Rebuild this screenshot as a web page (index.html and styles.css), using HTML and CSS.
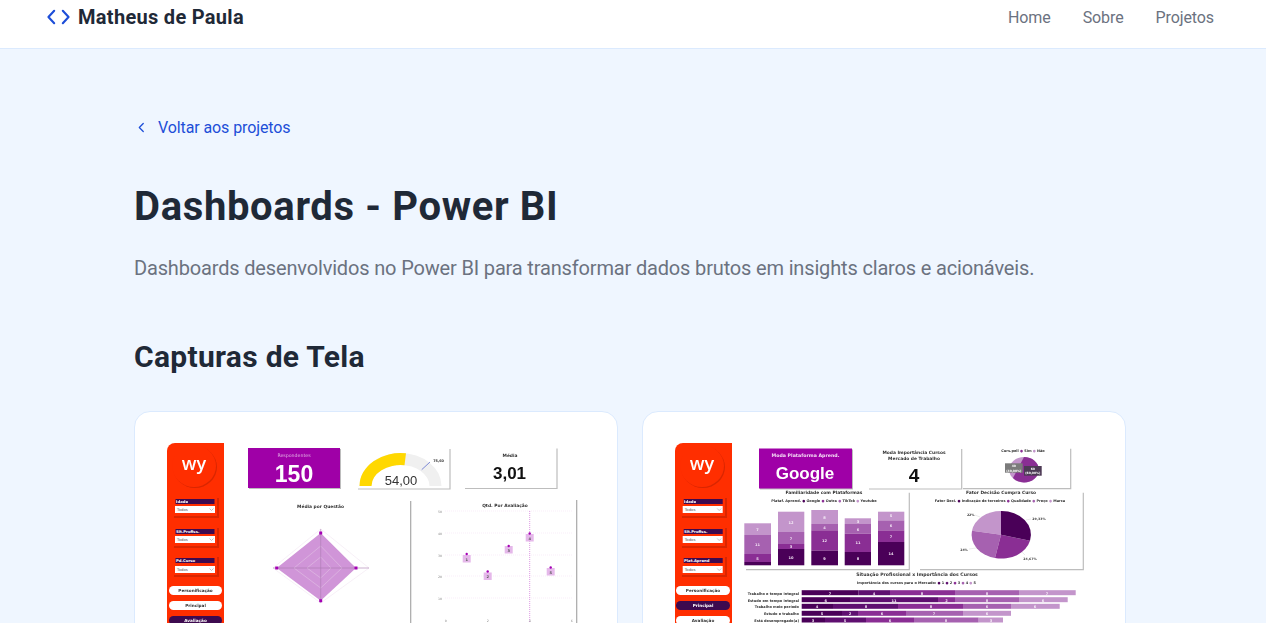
FILE: index.html
```html
<!DOCTYPE html>
<html lang="pt-BR">
<head>
  <meta charset="UTF-8" />
  <meta name="viewport" content="width=device-width, initial-scale=1.0" />
  <title>Dashboards - Power BI</title>
  <link rel="stylesheet" href="styles.css">
</head>
<body>
  <header class="topbar">
    <a href="#" class="brand">
      <svg class="brand-icon" viewBox="0 0 24 16" fill="none" stroke="currentColor" stroke-width="2.2" stroke-linecap="round" stroke-linejoin="round">
        <path d="M7.5 1.5 1.5 8l6 6.5" />
        <path d="M16.5 1.5 22.5 8l-6 6.5" />
      </svg>
      Matheus de Paula
    </a>
    <nav class="nav">
      <a href="#">Home</a>
      <a href="#">Sobre</a>
      <a href="#">Projetos</a>
    </nav>
  </header>

  <main class="content">
    <a href="#" class="back">
      <svg class="back-icon" viewBox="0 0 8 12" fill="none" stroke="currentColor" stroke-width="1.5" stroke-linecap="round" stroke-linejoin="round">
        <path d="M6 1.5 1.5 6 6 10.5" />
      </svg>
      Voltar aos projetos
    </a>
    <h1>Dashboards - Power BI</h1>
    <p class="lead">Dashboards desenvolvidos no Power BI para transformar dados brutos em insights claros e acionáveis.</p>
    <h2>Capturas de Tela</h2>

    <div class="shots">
      <!-- painel 1: avaliação -->
      <div class="shot-card">
        <svg class="shot" viewBox="167 444 418 240">
          <defs>
            <g id="pick">
              <rect class="white" x="0" y="0" width="40" height="7" />
              <text class="t-todos" x="2" y="5">Todos</text>
              <path class="pick-arrow" d="M34.500 2.500l2 2 2-2" />
            </g>
          </defs>
          <path class="red" d="M167 452a8 8 0 0 1 8-8h49v240h-57z" />
          <ellipse class="red-dark" cx="195" cy="468" rx="22" ry="21" />
          <ellipse class="red" cx="194" cy="467" rx="22" ry="21" />
          <text class="t-logo" x="194" y="471">wy</text>

          <rect class="red-dark" x="174" y="499" width="45" height="20" />
          <rect class="red" x="172" y="497" width="45" height="20" />
          <rect class="label-bar" x="175.500" y="500" width="39" height="5" />
          <text class="t-label" x="176" y="504.200">Idade</text>
          <use href="#pick" x="175" y="507" />

          <rect class="red-dark" x="174" y="529" width="45" height="20" />
          <rect class="red" x="172" y="527" width="45" height="20" />
          <rect class="label-bar" x="175.500" y="530" width="39" height="5" />
          <text class="t-label" x="176" y="534.200">Sit.Profiss.</text>
          <use href="#pick" x="175" y="537" />

          <rect class="red-dark" x="174" y="558" width="45" height="20" />
          <rect class="red" x="172" y="556" width="45" height="20" />
          <rect class="label-bar" x="175.500" y="559" width="39" height="5" />
          <text class="t-label" x="176" y="563.200">Pd.Curso</text>
          <use href="#pick" x="175" y="567" />

          <rect class="white" x="169" y="587" width="53" height="9" rx="4.500" />
          <text class="t-pill" x="195.500" y="593.200">Personificação</text>
          <rect class="white" x="169" y="602" width="53" height="9" rx="4.500" />
          <text class="t-pill" x="195.500" y="608.200">Principal</text>
          <rect class="label-bar" x="169" y="617" width="53" height="9" rx="4.500" />
          <text class="t-pill t-pill-on" x="195.500" y="623">Avaliação</text>

          <rect class="kpi-shadow" x="249" y="450" width="92" height="40" />
          <rect class="purple" x="248" y="449" width="92" height="40" />
          <text class="t-kpi-small" x="294" y="458">Respondentes</text>
          <text class="t-kpi-big" x="294" y="483">150</text>

          <path class="gauge-back" d="M359.500 487a41 33 0 0 1 82 0h-12a29 21 0 0 0-58 0z" />
          <path class="gauge-fill" d="M359.500 487a41 33 0 0 1 46.500-32.700l-1.500 12a29 21 0 0 0-33 20.700z" />
          <path class="gauge-target" d="M421.700 470.700 430 463" />
          <text class="t-bold" x="438.500" y="463">75,60</text>
          <text class="t-gauge" x="401" y="486">54,00</text>
          <path class="frame" d="M358 490h92v-40" />

          <path class="frame" d="M465 489.500h92v-40" />
          <text class="t-title" x="510" y="457.500">Média</text>
          <text class="t-value" x="509.500" y="480">3,01</text>

          <text class="t-title" x="320.500" y="509">Média por Questão</text>
          <path class="radar-web" d="M320.700 530 369 569 320.700 604 273 569z" />
          <path class="radar-fill" d="M320.700 534 356 569 320.700 601.700 276.700 569z" />
          <path class="radar-web" d="M320.700 547 342 569 320.700 589 294 569zM320.700 558 331 569 320.700 579 307 569z" />
          <path class="radar-axis" d="M273 569h96M320.700 530v74" />
          <rect class="magenta" x="319.200" y="532.500" width="3" height="3" />
          <rect class="magenta" x="354.500" y="567.500" width="3" height="3" />
          <rect class="magenta" x="319.200" y="600.200" width="3" height="3" />
          <rect class="magenta" x="275.200" y="567.500" width="3" height="3" />

          <path class="frame frame-dark" d="M410.700 502v182M576.700 501v183" />
          <text class="t-title" x="505" y="508">Qtd. Por Avaliação</text>
          <path class="grid-line" d="M445 512h127M445 534h127M445 556h127M445 577h127M445 599h127" />
          <path class="mark-line" d="M529.700 512v112" />
          <text class="t-axis" x="440" y="513.500">50</text>
          <text class="t-axis" x="440" y="535.500">40</text>
          <text class="t-axis" x="440" y="557.500">30</text>
          <text class="t-axis" x="440" y="578.500">20</text>
          <text class="t-axis" x="440" y="600.500">10</text>
          <text class="t-axis" x="445.700" y="622.500">0</text>
          <text class="t-axis" x="487.700" y="622.500">2</text>
          <text class="t-axis" x="529.700" y="622.500">4</text>
          <text class="t-axis" x="571.700" y="622.500">6</text>
          <g>
            <rect class="dot-box" x="462.700" y="556" width="8" height="7.500" />
            <circle class="magenta" cx="466.700" cy="555" r="1.200" />
            <text class="t-dot" x="466.700" y="561.500">1</text>
            <rect class="dot-box" x="483.700" y="573.500" width="8" height="7.500" />
            <circle class="magenta" cx="487.700" cy="572.500" r="1.200" />
            <text class="t-dot" x="487.700" y="579">2</text>
            <rect class="dot-box" x="504.700" y="547" width="8" height="7.500" />
            <circle class="magenta" cx="508.700" cy="547" r="1.200" />
            <text class="t-dot" x="508.700" y="552.500">3</text>
            <rect class="dot-box" x="525.700" y="535" width="8" height="7.500" />
            <circle class="magenta" cx="529.700" cy="534.500" r="1.200" />
            <text class="t-dot" x="529.700" y="540.500">4</text>
            <rect class="dot-box" x="546.700" y="569" width="8" height="7.500" />
            <circle class="magenta" cx="550.700" cy="568.500" r="1.200" />
            <text class="t-dot" x="550.700" y="574.500">5</text>
          </g>
        </svg>
      </div>

      <!-- painel 2: plataformas -->
      <div class="shot-card">
        <svg class="shot" viewBox="675 444 418 240">
          <path class="red" d="M675 452a8 8 0 0 1 8-8h49v240h-57z" />
          <ellipse class="red-dark" cx="703" cy="468" rx="22" ry="21" />
          <ellipse class="red" cx="702" cy="467" rx="22" ry="21" />
          <text class="t-logo" x="702" y="471">wy</text>

          <rect class="red-dark" x="682" y="499" width="45" height="20" />
          <rect class="red" x="680" y="497" width="45" height="20" />
          <rect class="label-bar" x="683.700" y="500" width="39" height="5" />
          <text class="t-label" x="684" y="504.200">Idade</text>
          <use href="#pick" x="682.700" y="507" />

          <rect class="red-dark" x="682" y="529" width="45" height="20" />
          <rect class="red" x="680" y="527" width="45" height="20" />
          <rect class="label-bar" x="683.700" y="530" width="39" height="5" />
          <text class="t-label" x="684" y="534.200">Sit.Profiss.</text>
          <use href="#pick" x="682.700" y="537" />

          <rect class="red-dark" x="682" y="558" width="45" height="20" />
          <rect class="red" x="680" y="556" width="45" height="20" />
          <rect class="label-bar" x="683.700" y="559" width="39" height="5" />
          <text class="t-label" x="684" y="563.200">Plat.Aprend</text>
          <use href="#pick" x="682.700" y="567" />

          <rect class="white" x="676" y="587" width="54" height="9" rx="4.500" />
          <text class="t-pill" x="703" y="593.200">Personificação</text>
          <rect class="label-bar" x="676" y="602" width="54" height="9" rx="4.500" />
          <text class="t-pill t-pill-on" x="703" y="608.200">Principal</text>
          <rect class="white" x="676" y="617" width="54" height="9" rx="4.500" />
          <text class="t-pill" x="703" y="623">Avaliação</text>

          <rect class="kpi-shadow" x="760" y="450.500" width="93" height="40" />
          <rect class="purple" x="759" y="449.500" width="93" height="40" />
          <text class="t-kpi-small t-kpi-strong" x="805.500" y="458">Moda Plataforma Aprend.</text>
          <text class="t-kpi-word" x="805" y="480">Google</text>

          <path class="frame" d="M869 490h92.700v-40" />
          <text class="t-title" x="914" y="454.500">Moda Importância Cursos</text>
          <text class="t-title" x="914" y="460.500">Mercado de Trabalho</text>
          <text class="t-value t-value-four" x="914" y="483">4</text>

          <path class="frame" d="M963 489.700h107.700v-40" />
          <text class="t-legend" x="1023" y="452.500">Curs.pell <tspan class="c3">●</tspan> Sim <tspan class="c5">●</tspan> Não</text>
          <ellipse class="s5" cx="1024" cy="470.700" rx="14.800" ry="12.700" />
          <path class="s3" d="M1024 458a14.800 12.700 0 0 1 0 25.400 14.800 12.700 0 0 1-11-4.400z" />
          <rect class="tag" x="1005" y="464.300" width="17.700" height="9.400" />
          <text class="t-tag" x="1013.800" y="468.200">40</text>
          <text class="t-tag" x="1013.800" y="472.500">(40,00%)</text>
          <rect class="tag tag-dark" x="1024" y="467" width="17.700" height="9.700" />
          <text class="t-tag" x="1032.800" y="471">60</text>
          <text class="t-tag" x="1032.800" y="475.300">(60,00%)</text>

          <text class="t-title" x="824" y="495">Familiaridade com Plataformas</text>
          <text class="t-legend" x="824" y="503">Plataf. Aprend. <tspan class="c1">●</tspan> Google <tspan class="c3">●</tspan> Outra <tspan class="c4">●</tspan> TikTok <tspan class="c5">●</tspan> Youtube</text>
          <path class="frame" d="M746 570.700h163.300v-77" />
          <g>
            <rect class="s5" x="744.300" y="524.300" width="26.700" height="11.700" />
            <rect class="s4" x="744.300" y="536" width="26.700" height="19" />
            <rect class="s3" x="744.300" y="555" width="26.700" height="8" />
            <rect class="s1" x="744.300" y="563" width="26.700" height="3.300" />
            <text class="t-seg t-seg-dark" x="757.600" y="531.500">7</text>
            <text class="t-seg" x="757.600" y="547">11</text>
            <text class="t-seg" x="757.600" y="560.500">5</text>

            <rect class="s5" x="778" y="512.700" width="26.300" height="20.300" />
            <rect class="s4" x="778" y="533" width="26.300" height="12" />
            <rect class="s3" x="778" y="545" width="26.300" height="5" />
            <rect class="s1" x="778" y="550" width="26.300" height="16.300" />
            <text class="t-seg t-seg-dark" x="791" y="524.500">12</text>
            <text class="t-seg" x="791" y="540.500">7</text>
            <text class="t-seg" x="791" y="549">3</text>
            <text class="t-seg" x="791" y="559.500">10</text>

            <rect class="s5" x="811.300" y="511" width="26.700" height="14" />
            <rect class="s4" x="811.300" y="525" width="26.700" height="6.300" />
            <rect class="s3" x="811.300" y="531.300" width="26.700" height="20.400" />
            <rect class="s1" x="811.300" y="551.700" width="26.700" height="14.600" />
            <text class="t-seg t-seg-dark" x="824.600" y="519.500">8</text>
            <text class="t-seg" x="824.600" y="529.500">4</text>
            <text class="t-seg" x="824.600" y="543">12</text>
            <text class="t-seg" x="824.600" y="560.500">9</text>

            <rect class="s5" x="844.700" y="519.300" width="26.300" height="5.700" />
            <rect class="s4" x="844.700" y="525" width="26.300" height="9.700" />
            <rect class="s3" x="844.700" y="534.700" width="26.300" height="18.300" />
            <rect class="s1" x="844.700" y="553" width="26.300" height="13.300" />
            <text class="t-seg t-seg-dark" x="858" y="523.500">3</text>
            <text class="t-seg" x="858" y="531.500">6</text>
            <text class="t-seg" x="858" y="545">11</text>
            <text class="t-seg" x="858" y="561">8</text>

            <rect class="s5" x="878" y="512.700" width="26.300" height="8.700" />
            <rect class="s4" x="878" y="521.400" width="26.300" height="10" />
            <rect class="s3" x="878" y="531.400" width="26.300" height="11.600" />
            <rect class="s1" x="878" y="543" width="26.300" height="23.300" />
            <text class="t-seg t-seg-dark" x="891" y="518">5</text>
            <text class="t-seg" x="891" y="527.500">6</text>
            <text class="t-seg" x="891" y="538.500">7</text>
            <text class="t-seg" x="891" y="556">14</text>
          </g>

          <text class="t-title" x="1001" y="495">Fator Decisão Compra Curso</text>
          <text class="t-legend" x="1000" y="503">Fator Deci. <tspan class="c1">●</tspan> Indicação de terceiros <tspan class="c3">●</tspan> Qualidade <tspan class="c4">●</tspan> Preço <tspan class="c5">●</tspan> Marca</text>
          <path class="frame" d="M920 570.700h163.300v-77" />
          <path class="s5" d="M1001 535.700V512a29.300 23.700 0 0 0-29 19.700z" />
          <path class="s4" d="M1001 535.700 972 531.700a29.300 23.700 0 0 0 23 27.300z" />
          <path class="s3" d="M1001 535.700 995 559a29.300 23.700 0 0 0 35-17.300z" />
          <path class="s1" d="M1001 535.700V512a29.300 23.700 0 0 1 29 29.700z" />
          <path class="pie-lead" d="M1026 521l5-1M1022 553l3 3M976 549l-7 1M980 518l-5-2" />
          <text class="t-pct" x="1039" y="521">29,33%</text>
          <text class="t-pct" x="1030" y="560.500">24,67%</text>
          <text class="t-pct" x="964" y="551.500">24%</text>
          <text class="t-pct" x="970.700" y="516.800">22%</text>

          <text class="t-title t-title-wide" x="917" y="577">Situação Profissional x Importância dos Cursos</text>
          <text class="t-legend" x="916.500" y="584.500">Importância dos cursos para o Mercado: <tspan class="c1">●</tspan> 1 <tspan class="c2">●</tspan> 2 <tspan class="c3">●</tspan> 3 <tspan class="c4">●</tspan> 4 <tspan class="c5">●</tspan> 5</text>

          <text class="t-row" x="799" y="595.500">Trabalho e tempo integral</text>
          <rect class="s1" x="801.700" y="591.200" width="56.600" height="5" />
          <rect class="s2" x="858.300" y="591.200" width="31.700" height="5" />
          <rect class="s3" x="890" y="591.200" width="65" height="5" />
          <rect class="s4" x="955" y="591.200" width="64" height="5" />
          <rect class="s5" x="1019" y="591.200" width="56.700" height="5" />
          <text class="t-seg" x="830" y="595.500">7</text>
          <text class="t-seg" x="874" y="595.500">4</text>
          <text class="t-seg" x="922" y="595.500">8</text>
          <text class="t-seg" x="987" y="595.500">8</text>
          <text class="t-seg t-seg-dark" x="1047" y="595.500">7</text>

          <text class="t-row" x="799" y="602.500">Estudo em tempo integral</text>
          <rect class="s1" x="801.700" y="598.200" width="48.300" height="5" />
          <rect class="s2" x="850" y="598.200" width="88" height="5" />
          <rect class="s3" x="938" y="598.200" width="17" height="5" />
          <rect class="s4" x="955" y="598.200" width="64" height="5" />
          <rect class="s5" x="1019" y="598.200" width="48.700" height="5" />
          <text class="t-seg" x="825.700" y="602.500">6</text>
          <text class="t-seg" x="894" y="602.500">11</text>
          <text class="t-seg" x="946.500" y="602.500">2</text>
          <text class="t-seg" x="987" y="602.500">8</text>
          <text class="t-seg t-seg-dark" x="1043" y="602.500">6</text>

          <text class="t-row" x="799" y="609">Trabalho meio período</text>
          <rect class="s1" x="801.700" y="604.800" width="31.300" height="5" />
          <rect class="s2" x="833" y="604.800" width="65" height="5" />
          <rect class="s3" x="898" y="604.800" width="65" height="5" />
          <rect class="s4" x="963" y="604.800" width="48" height="5" />
          <rect class="s5" x="1011" y="604.800" width="48.700" height="5" />
          <text class="t-seg" x="817" y="609">4</text>
          <text class="t-seg" x="866" y="609">8</text>
          <text class="t-seg" x="931" y="609">8</text>
          <text class="t-seg" x="987" y="609">6</text>
          <text class="t-seg t-seg-dark" x="1035" y="609">6</text>

          <text class="t-row" x="799" y="616">Estudo e trabalho</text>
          <rect class="s1" x="801.700" y="611.800" width="40.300" height="5" />
          <rect class="s2" x="842" y="611.800" width="16" height="5" />
          <rect class="s3" x="858" y="611.800" width="48" height="5" />
          <rect class="s4" x="906" y="611.800" width="57" height="5" />
          <rect class="s5" x="963" y="611.800" width="48" height="5" />
          <text class="t-seg" x="822" y="616">5</text>
          <text class="t-seg" x="850" y="616">2</text>
          <text class="t-seg" x="882" y="616">6</text>
          <text class="t-seg" x="934" y="616">7</text>
          <text class="t-seg t-seg-dark" x="987" y="616">6</text>

          <text class="t-row" x="799" y="622.700">Está desempregado(a)</text>
          <rect class="s1" x="801.700" y="618.500" width="23.300" height="5" />
          <rect class="s2" x="825" y="618.500" width="41" height="5" />
          <rect class="s3" x="866" y="618.500" width="48" height="5" />
          <rect class="s4" x="914" y="618.500" width="64.700" height="5" />
          <rect class="s5" x="978.700" y="618.500" width="24.300" height="5" />
          <text class="t-seg" x="813" y="622.700">3</text>
          <text class="t-seg" x="845" y="622.700">5</text>
          <text class="t-seg" x="890" y="622.700">6</text>
          <text class="t-seg" x="946" y="622.700">8</text>
          <text class="t-seg t-seg-dark" x="991" y="622.700">3</text>
        </svg>
      </div>
    </div>
  </main>
</body>
</html>
```

FILE: styles.css
```css
html, body {
  height: 100%;
  overflow: hidden;
}
body {
  margin: 0;
  background: #eff6ff;
  font-family: Roboto, "Noto Sans", sans-serif;
  color: #1f2937;
}
a {
  text-decoration: none;
}

.topbar {
  box-sizing: border-box;
  height: 49px;
  background: white;
  border-bottom: 1px solid #dbeafe;
  padding: 0 52px 14px 47px;
  display: flex;
  justify-content: space-between;
  align-items: center;
}
.brand {
  display: flex;
  align-items: center;
  gap: 8px;
  font-size: 20px;
  font-weight: 700;
  letter-spacing: 0.3px;
  color: #1f2937;
}
.brand-icon {
  width: 23px;
  height: 16px;
  color: #1d4ed8;
}
.nav {
  display: flex;
  gap: 32px;
  font-size: 16px;
  letter-spacing: -0.1px;
}
.nav a {
  color: #6b7280;
}

.content {
  width: 992px;
  margin-left: 134px;
  padding-top: 66px;
}
.back {
  display: flex;
  align-items: center;
  gap: 13px;
  height: 24px;
  padding-left: 4px;
  font-size: 16px;
  letter-spacing: -0.1px;
  color: #1d4ed8;
}
.back-icon {
  width: 7px;
  height: 11px;
}
h1 {
  margin: 44px 0 0;
  font-size: 40px;
  line-height: 48px;
  font-weight: 700;
  letter-spacing: 0.65px;
  color: #1f2937;
}
.lead {
  margin: 23px 0 0;
  font-size: 20px;
  line-height: 28px;
  letter-spacing: -0.16px;
  color: #6b7280;
}
h2 {
  margin: 57px 0 0;
  font-size: 30px;
  line-height: 36px;
  font-weight: 700;
  letter-spacing: 0.3px;
  color: #1f2937;
}

.shots {
  display: grid;
  grid-template-columns: 1fr 1fr;
  gap: 24px;
  margin-top: 36px;
}
.shot-card {
  background: white;
  border: 1px solid #dbeafe;
  border-radius: 16px;
  padding: 31px 32px;
}
.shot {
  display: block;
  width: 418px;
  height: 240px;
  filter: blur(0.4px);
  font-family: "DejaVu Sans", sans-serif;
}

/* cores dos paineis */
.red { fill: #ff2e00; }
.red-dark { fill: #d92600; }
.white { fill: white; }
.label-bar { fill: #3d0a4f; }
.purple { fill: #9f00a7; }
.magenta { fill: #a400b4; }
.kpi-shadow { fill: #bdbdbd; }
.s1 { fill: #4a0058; }
.s2 { fill: #5f0f70; }
.s3 { fill: #8a2e94; }
.s4 { fill: #a661b0; }
.s5 { fill: #c395cb; }
.c1 { fill: #4a0058; }
.c2 { fill: #5f0f70; }
.c3 { fill: #8a2e94; }
.c4 { fill: #a661b0; }
.c5 { fill: #c395cb; }
.gauge-back { fill: #f0f0f0; }
.gauge-fill { fill: #ffd800; }
.gauge-target { stroke: #4a5bc8; stroke-width: 0.7; fill: none; }
.frame { fill: none; stroke: #bdbdbd; stroke-width: 1.2; }
.frame-dark { stroke: #a8a8a8; }
.radar-fill { fill: #d095d8; }
.radar-web { fill: none; stroke: #ead9ec; stroke-width: 0.4; }
.radar-axis { fill: none; stroke: #a97ab0; stroke-width: 0.6; }
.grid-line { fill: none; stroke: #f3d8f3; stroke-width: 0.5; stroke-dasharray: 1 1; }
.mark-line { fill: none; stroke: #cf6cd6; stroke-width: 0.7; stroke-dasharray: 1 1; }
.dot-box { fill: #e5b8ea; }
.pick-arrow { fill: none; stroke: #888; stroke-width: 0.5; }
.tag { fill: #7b7b7b; }
.tag-dark { fill: #4d3a55; }
.pie-lead { fill: none; stroke: #ccc; stroke-width: 0.4; }

/* textos dos paineis */
.t-logo { fill: white; font-family: "Open Sans", sans-serif; font-size: 18px; font-weight: 600; text-anchor: middle; }
.t-label { fill: white; font-size: 3.800px; font-weight: 700; }
.t-todos { fill: #555; font-size: 3.800px; }
.t-pill { fill: #333; font-size: 4.200px; font-weight: 700; text-anchor: middle; }
.t-pill-on { fill: white; }
.t-kpi-small { fill: #e3b4e6; font-size: 4.700px; text-anchor: middle; }
.t-kpi-strong { fill: #f4dcf5; font-weight: 700; }
.t-kpi-big { fill: white; font-family: "Liberation Sans", sans-serif; font-size: 23px; font-weight: 700; text-anchor: middle; }
.t-kpi-word { fill: white; font-family: "Liberation Sans", sans-serif; font-size: 17px; font-weight: 700; text-anchor: middle; }
.t-bold { fill: #333; font-size: 3.400px; font-weight: 700; text-anchor: middle; }
.t-gauge { fill: #333; font-family: "Liberation Sans", sans-serif; font-size: 13px; text-anchor: middle; }
.t-title { fill: #333; font-size: 4.400px; font-weight: 700; text-anchor: middle; }
.t-title-wide { font-size: 4.600px; }
.t-value { fill: #111; font-family: "Liberation Sans", sans-serif; font-size: 17px; font-weight: 700; text-anchor: middle; }
.t-value-four { font-size: 19px; }
.t-axis { fill: #888; font-size: 3.200px; text-anchor: middle; }
.t-dot { fill: #555; font-size: 3.600px; font-weight: 700; text-anchor: middle; }
.t-legend { fill: #333; font-size: 3.500px; font-weight: 700; text-anchor: middle; }
.t-tag { fill: white; font-size: 3px; font-weight: 700; text-anchor: middle; }
.t-seg { fill: #f1e2f3; font-size: 3.600px; font-weight: 700; text-anchor: middle; }
.t-seg-dark { fill: #f7eef8; }
.t-pct { fill: #444; font-size: 3.200px; font-weight: 700; text-anchor: middle; }
.t-row { fill: #333; font-size: 3.500px; font-weight: 700; text-anchor: end; }
```
